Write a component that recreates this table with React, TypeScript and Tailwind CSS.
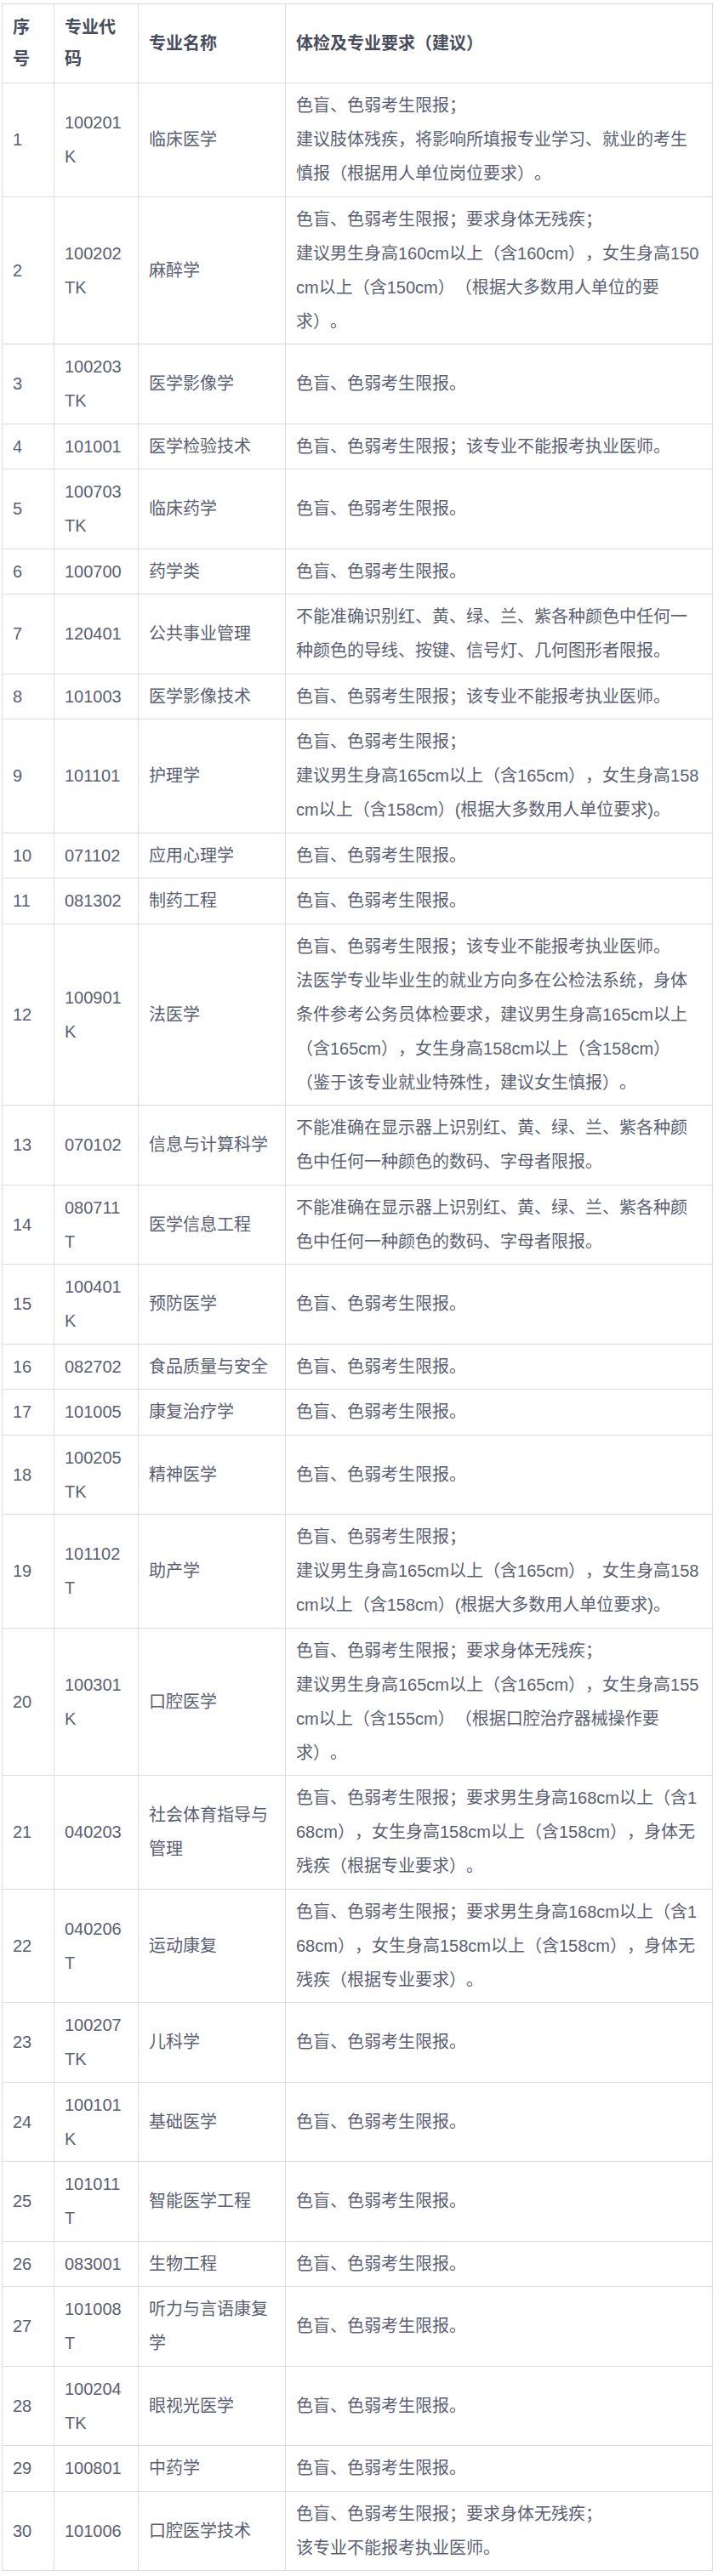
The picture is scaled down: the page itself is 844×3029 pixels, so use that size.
const FONT = "font-['Liberation_Sans','Noto_Sans_CJK_SC',sans-serif]";

type Row = [string, string, string, string];

// 体检及专业要求数据
const ROWS: Row[] = [
  ["1", "100201K", "临床医学", "色盲、色弱考生限报；\n建议肢体残疾，将影响所填报专业学习、就业的考生慎报（根据用人单位岗位要求）。"],
  ["2", "100202TK", "麻醉学", "色盲、色弱考生限报；要求身体无残疾；\n建议男生身高160cm以上（含160cm），女生身高150cm以上（含150cm）（根据大多数用人单位的要求）。"],
  ["3", "100203TK", "医学影像学", "色盲、色弱考生限报。"],
  ["4", "101001", "医学检验技术", "色盲、色弱考生限报；该专业不能报考执业医师。"],
  ["5", "100703TK", "临床药学", "色盲、色弱考生限报。"],
  ["6", "100700", "药学类", "色盲、色弱考生限报。"],
  ["7", "120401", "公共事业管理", "不能准确识别红、黄、绿、兰、紫各种颜色中任何一种颜色的导线、按键、信号灯、几何图形者限报。"],
  ["8", "101003", "医学影像技术", "色盲、色弱考生限报；该专业不能报考执业医师。"],
  ["9", "101101", "护理学", "色盲、色弱考生限报；\n建议男生身高165cm以上（含165cm），女生身高158cm以上（含158cm）(根据大多数用人单位要求)。"],
  ["10", "071102", "应用心理学", "色盲、色弱考生限报。"],
  ["11", "081302", "制药工程", "色盲、色弱考生限报。"],
  ["12", "100901K", "法医学", "色盲、色弱考生限报；该专业不能报考执业医师。\n法医学专业毕业生的就业方向多在公检法系统，身体条件参考公务员体检要求，建议男生身高165cm以上（含165cm），女生身高158cm以上（含158cm）（鉴于该专业就业特殊性，建议女生慎报）。"],
  ["13", "070102", "信息与计算科学", "不能准确在显示器上识别红、黄、绿、兰、紫各种颜色中任何一种颜色的数码、字母者限报。"],
  ["14", "080711T", "医学信息工程", "不能准确在显示器上识别红、黄、绿、兰、紫各种颜色中任何一种颜色的数码、字母者限报。"],
  ["15", "100401K", "预防医学", "色盲、色弱考生限报。"],
  ["16", "082702", "食品质量与安全", "色盲、色弱考生限报。"],
  ["17", "101005", "康复治疗学", "色盲、色弱考生限报。"],
  ["18", "100205TK", "精神医学", "色盲、色弱考生限报。"],
  ["19", "101102T", "助产学", "色盲、色弱考生限报；\n建议男生身高165cm以上（含165cm），女生身高158cm以上（含158cm）(根据大多数用人单位要求)。"],
  ["20", "100301K", "口腔医学", "色盲、色弱考生限报；要求身体无残疾；\n建议男生身高165cm以上（含165cm），女生身高155cm以上（含155cm）（根据口腔治疗器械操作要求）。"],
  ["21", "040203", "社会体育指导与管理", "色盲、色弱考生限报；要求男生身高168cm以上（含168cm），女生身高158cm以上（含158cm），身体无残疾（根据专业要求）。"],
  ["22", "040206T", "运动康复", "色盲、色弱考生限报；要求男生身高168cm以上（含168cm），女生身高158cm以上（含158cm），身体无残疾（根据专业要求）。"],
  ["23", "100207TK", "儿科学", "色盲、色弱考生限报。"],
  ["24", "100101K", "基础医学", "色盲、色弱考生限报。"],
  ["25", "101011T", "智能医学工程", "色盲、色弱考生限报。"],
  ["26", "083001", "生物工程", "色盲、色弱考生限报。"],
  ["27", "101008T", "听力与言语康复学", "色盲、色弱考生限报。"],
  ["28", "100204TK", "眼视光医学", "色盲、色弱考生限报。"],
  ["29", "100801", "中药学", "色盲、色弱考生限报。"],
  ["30", "101006", "口腔医学技术", "色盲、色弱考生限报；要求身体无残疾；\n该专业不能报考执业医师。"],
];

const TH =
  "border border-[#dcdcdc] px-3 py-[9px] text-left align-middle font-bold leading-[37px] text-[#474d5c]";
const TD =
  "border border-[#dcdcdc] px-3 py-[6.25px] align-middle leading-[40px] text-[#5a6072]";

export default function App() {
  return (
    <div className={`min-h-[3029px] bg-white pt-[4px] ${FONT} text-[20px] [text-spacing-trim:space-all]`}>
      <table className="ml-[2px] w-[835px] table-fixed border-collapse">
        <colgroup>
          <col className="w-[61px]" />
          <col className="w-[99px]" />
          <col className="w-[173px]" />
          <col className="w-[502px]" />
        </colgroup>
        <thead>
          <tr>
            <th className={TH}>序号</th>
            <th className={TH}>专业代码</th>
            <th className={TH}>专业名称</th>
            <th className={TH}>体检及专业要求（建议）</th>
          </tr>
        </thead>
        <tbody>
          {ROWS.map(([no, code, name, req]) => (
            <tr key={no}>
              <td className={TD}>{no}</td>
              <td className={`${TD} break-all`}>{code}</td>
              <td className={TD}>{name}</td>
              <td className={`${TD} whitespace-pre-line break-all`}>{req}</td>
            </tr>
          ))}
        </tbody>
      </table>
    </div>
  );
}
